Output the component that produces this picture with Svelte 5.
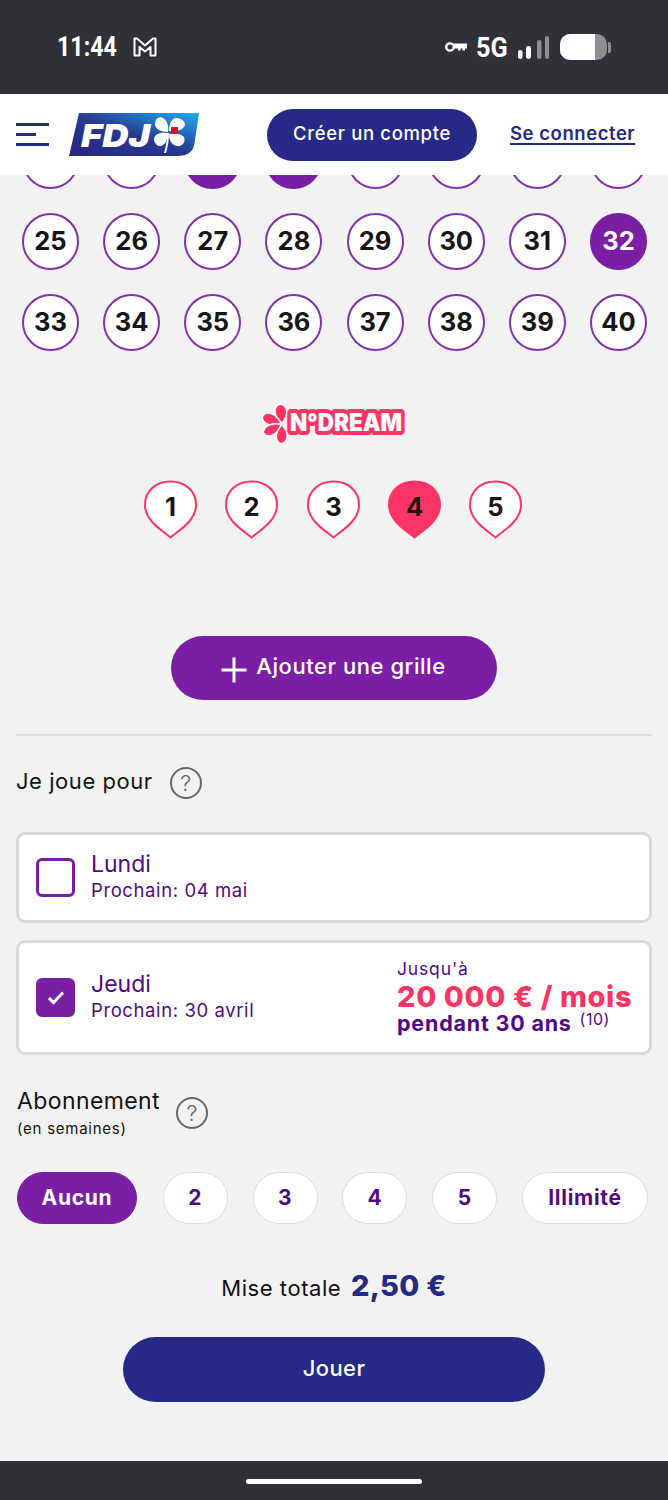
<script>
  const rows = Array.from({ length: 24 }, (_, i) => i + 17);
  const picked = [19, 20, 32];
  const dreams = [1, 2, 3, 4, 5];
  const durations = ['2', '3', '4', '5'];
</script>

<div class="page">
  <div class="status">
    <div class="status-left">
      <span class="time">11:44</span>
      <svg class="gmail" viewBox="0 0 24 20" width="24" height="20" aria-hidden="true">
        <path d="M1.500 1.500 L1.500 18.500 L6.500 18.500 L6.500 10 L12 14.500 L17.500 10 L17.500 18.500 L22.500 18.500 L22.500 1.500 L20 1.500 L12 8.500 L4 1.500 Z" fill="none" stroke="#fff" stroke-width="2" stroke-linejoin="round"/>
      </svg>
    </div>
    <div class="status-right">
      <svg viewBox="0 0 22 10" width="22" height="10" aria-hidden="true">
        <ellipse cx="5" cy="5" rx="3.800" ry="3.600" fill="none" stroke="#fff" stroke-width="2.400"/>
        <path d="M9 1.500 H22 V6.500 H20 V8.500 H17.500 V6.500 H15.500 V8.500 H13 V6.500 H9 Z" fill="#fff"/>
      </svg>
      <span class="fiveg">5G</span>
      <svg class="signal" viewBox="0 0 31 23" width="31" height="23" aria-hidden="true">
        <rect x="0" y="14" width="4.500" height="9" rx="2.200" fill="#fff"/>
        <rect x="8" y="10" width="5" height="13" rx="2.400" fill="#fff"/>
        <rect x="19" y="4" width="4.500" height="19" rx="2.200" fill="#8e8e8e"/>
        <rect x="27" y="0" width="4" height="23" rx="2" fill="#8e8e8e"/>
      </svg>
      <div class="battery"><div class="battery-fill"></div></div>
      <div class="battery-tip"></div>
    </div>
  </div>

  <header class="top">
    <div class="burger"><i></i><i class="short"></i><i></i></div>
    <svg class="logo" viewBox="0 0 130 43" width="130" height="43" role="img" aria-label="FDJ">
      <defs>
        <linearGradient id="fdj" x1="0.080" y1="0.900" x2="0.950" y2="0">
          <stop offset="0" stop-color="#262a86"/>
          <stop offset="0.450" stop-color="#27388f"/>
          <stop offset="1" stop-color="#1eaaea"/>
        </linearGradient>
      </defs>
      <path d="M10 0 H130 L125.500 30 Q124 43 108 43 H0 Z" fill="url(#fdj)"/>
      <text class="fdj" x="12" y="34" textLength="69" lengthAdjust="spacingAndGlyphs">FDJ</text>
      <g fill="#fff">
        <path d="M99 19 C92 19 86 16 86 11 C86 6 90 3 94 5 C98 7 100 13 99 19Z"/>
        <path d="M100 18 C100 11 103 4 108 5 C114 6 118 10 115 14 C112 18 106 19 100 18Z"/>
        <path d="M98 20 C91 19 85 21 85 27 C86 32 91 35 94 32 C97 30 99 26 98 20Z"/>
        <path d="M100 21 C104 20 112 20 115 24 C117 29 113 34 108 33 C103 32 100 28 100 21Z"/>
        <path d="M98 20 C98 27 97 33 95 40 L97 40 C99 33 100 27 100 20Z"/>
      </g>
      <rect x="102" y="14" width="7" height="7" fill="#e8101c"/>
    </svg>
    <button class="signup">Créer un compte</button>
    <a class="login" href="#login">Se connecter</a>
  </header>

  <main>
    <div class="balls">
      {#each rows as n}
        <div class="ball" class:on={picked.includes(n)}>{n >= 25 ? n : ''}</div>
      {/each}
    </div>

    <div class="dream-logo">
      <svg viewBox="0 0 146 42" width="146" height="42" role="img" aria-label="N°DREAM">
        <g fill="#fd3566" stroke="#fff" stroke-width="2.500" paint-order="stroke" stroke-linejoin="round">
          <path d="M21 19 C13 13 13 3 19 2 C26 2 27 12 21 19Z"/>
          <path d="M19 20 C12 23 3 21 2 15 C4 7 15 11 19 20Z"/>
          <path d="M19 22 C12 20 4 23 3 29 C6 36 16 31 19 22Z"/>
          <path d="M21 23 C15 29 14 38 20 40 C27 39 27 29 21 23Z"/>
        </g>
        <text class="dream-text" x="29" y="28" textLength="112" lengthAdjust="spacingAndGlyphs">N°DREAM</text>
      </svg>
    </div>

    <div class="hearts">
      {#each dreams as n}
        <svg class="heart" class:on={n === 4} viewBox="0 0 53 59" width="53" height="59" role="img" aria-label={String(n)}>
          <path d="M26.500 57.500 C19 51 1 41 1 25 C1 10 13 1.500 26.500 1.500 C40 1.500 52 10 52 25 C52 41 34 51 26.500 57.500Z"/>
          <text x="26.500" y="36">{n}</text>
        </svg>
      {/each}
    </div>

    <button class="add">
      <svg viewBox="0 0 28 28" width="28" height="28" aria-hidden="true">
        <path d="M14 1.500 V26.500 M1.500 14 H26.500" stroke="#fff" stroke-width="3" fill="none"/>
      </svg>
      <span>Ajouter une grille</span>
    </button>

    <hr />

    <div class="label-row play">
      <span class="label">Je joue pour</span>
      <span class="help">?</span>
    </div>

    <div class="card lundi">
      <span class="check"></span>
      <div class="day">
        <div class="day-name">Lundi</div>
        <div class="day-next">Prochain: 04 mai</div>
      </div>
    </div>

    <div class="card jeudi">
      <span class="check on">
        <svg viewBox="0 0 18 15" width="18" height="15" aria-hidden="true">
          <path d="M2 8 L6.500 12.500 L16 2.500" fill="none" stroke="#fff" stroke-width="3"/>
        </svg>
      </span>
      <div class="day">
        <div class="day-name">Jeudi</div>
        <div class="day-next">Prochain: 30 avril</div>
      </div>
      <div class="prize">
        <div class="upto">Jusqu'à</div>
        <div class="amount">20 000 € / mois</div>
        <div class="during">pendant 30 ans <sup>(10)</sup></div>
      </div>
    </div>

    <div class="label-row sub">
      <div>
        <div class="label abo">Abonnement</div>
        <div class="weeks">(en semaines)</div>
      </div>
      <span class="help">?</span>
    </div>

    <div class="pills">
      <span class="pill active wide">Aucun</span>
      {#each durations as d}
        <span class="pill">{d}</span>
      {/each}
      <span class="pill wider">Illimité</span>
    </div>

    <div class="total">Mise totale <strong>2,50 €</strong></div>

    <button class="play-btn">Jouer</button>
  </main>

  <div class="navbar"><i></i></div>
</div>

<style>
  :global(body) {
    margin: 0;
    background: #f2f2f2;
  }
  .page {
    width: 668px;
    height: 1500px;
    display: flex;
    flex-direction: column;
    overflow: hidden;
    font-family: Inter, "Liberation Sans", sans-serif;
    color: #111;
  }
  .status {
    height: 94px;
    flex: none;
    box-sizing: border-box;
    background: #303136;
    display: flex;
    justify-content: space-between;
    align-items: center;
    padding: 0 57px;
    color: #fff;
  }
  .status-left {
    display: flex;
    align-items: center;
    gap: 15px;
  }
  .time {
    display: block;
    width: 61px;
    font-family: Roboto, sans-serif;
    font-weight: 700;
    font-size: 27px;
    white-space: nowrap;
    transform: scaleX(0.86);
    transform-origin: left center;
  }
  .status-right {
    display: flex;
    align-items: center;
  }
  .fiveg {
    display: block;
    width: 31px;
    margin: 0 11px 0 9px;
    font-family: Roboto, sans-serif;
    font-weight: 700;
    font-size: 28px;
    white-space: nowrap;
    transform: scaleX(0.9);
    transform-origin: left center;
  }
  .battery {
    width: 47px;
    height: 26px;
    margin-left: 11px;
    border-radius: 10px;
    background: #8e8e8e;
    overflow: hidden;
  }
  .battery-fill {
    width: 35px;
    height: 100%;
    background: #fff;
  }
  .battery-tip {
    width: 3px;
    height: 11px;
    margin-left: 1px;
    border-radius: 0 2px 2px 0;
    background: #8e8e8e;
  }
  .top {
    position: relative;
    z-index: 2;
    height: 81px;
    flex: none;
    box-sizing: border-box;
    background: #fff;
    display: flex;
    align-items: center;
    padding: 0 0 0 16px;
  }
  .burger {
    width: 33px;
    display: flex;
    flex-direction: column;
    gap: 7px;
  }
  .burger i {
    display: block;
    height: 3px;
    background: #262a86;
  }
  .burger .short { width: 20px; }
  .logo { margin-left: 20px; margin-top: -1px; }
  .fdj {
    font-family: Inter, sans-serif;
    font-weight: 900;
    font-style: italic;
    font-size: 32px;
    fill: #fff;
  }
  .signup {
    margin-left: 68px;
    width: 210px;
    height: 52px;
    border: 0;
    border-radius: 26px;
    background: #262a86;
    color: #fff;
    font: 500 18.500px Inter, sans-serif;
    letter-spacing: 0.65px;
    padding: 0 0 4px;
  }
  .login {
    margin-left: 33px;
    font-weight: 600;
    font-size: 18.500px;
    letter-spacing: 0.55px;
    color: #262a86;
    text-decoration-thickness: 2px;
    text-underline-offset: 3px;
    margin-top: -4px;
  }
  main {
    flex: 1;
    min-height: 0;
    display: flex;
    flex-direction: column;
  }
  .balls {
    margin-top: -43px;
    padding: 0 21px 0 22px;
    display: grid;
    grid-template-columns: repeat(8, 57px);
    justify-content: space-between;
    row-gap: 24px;
  }
  .ball {
    width: 57px;
    height: 57px;
    box-sizing: border-box;
    border: 2px solid #8232ab;
    border-radius: 50%;
    background: #fff;
    display: flex;
    align-items: center;
    justify-content: center;
    padding-bottom: 2px;
    font-weight: 700;
    font-size: 25.500px;
    color: #161616;
  }
  .ball.on {
    background: #7a1ea5;
    border-color: #7a1ea5;
    color: #fff;
  }
  .dream-logo {
    margin-top: 52px;
    display: flex;
    justify-content: center;
    height: 42px;
  }
  .dream-logo svg { overflow: visible; }
  .dream-text {
    font-family: Inter, sans-serif;
    font-weight: 900;
    font-size: 24px;
    fill: #fff;
    stroke: #fd3566;
    stroke-width: 8px;
    stroke-linejoin: round;
    paint-order: stroke;
  }
  .hearts {
    margin-top: 35px;
    margin-right: 2px;
    display: flex;
    justify-content: center;
    gap: 28.250px;
  }
  .heart path {
    fill: #fff;
    stroke: #fd3566;
    stroke-width: 2;
  }
  .heart.on path { fill: #fd3566; }
  .heart text {
    font-family: Inter, sans-serif;
    font-weight: 700;
    font-size: 25.500px;
    text-anchor: middle;
    fill: #161616;
  }
  .add {
    align-self: center;
    margin-top: 97px;
    width: 326px;
    height: 64px;
    flex: none;
    border: 0;
    border-radius: 32px;
    background: #7a1ea5;
    color: #fff;
    font: 500 22px Inter, sans-serif;
    letter-spacing: 0.55px;
    display: flex;
    align-items: center;
    justify-content: center;
    gap: 8px;
    padding: 0 2px 0 0;
  }
  .add span { margin-top: -5px; }
  .add svg { margin-top: 4px; }
  hr {
    width: 636px;
    margin: 34px 0 0 16px;
    border: 0;
    border-top: 2px solid #dcdcdc;
    flex: none;
  }
  .label-row {
    display: flex;
    align-items: center;
    padding-left: 16px;
  }
  .play {
    margin-top: 29px;
    gap: 17px;
    height: 34px;
  }
  .label {
    font-size: 22px;
    letter-spacing: 0.55px;
    font-weight: 400;
    color: #111;
  }
  .play .label { margin-top: -2px; }
  .play .help { margin-top: 2px; }
  .help {
    width: 32px;
    height: 32px;
    box-sizing: border-box;
    border: 2px solid #666;
    border-radius: 50%;
    display: flex;
    align-items: center;
    justify-content: center;
    font-size: 22px;
    font-weight: 300;
    color: #666;
  }
  .card {
    width: 636px;
    margin-left: 16px;
    box-sizing: border-box;
    flex: none;
    background: #fff;
    border: 3px solid #d9d9d9;
    border-radius: 9px;
    display: flex;
    align-items: center;
    padding: 0 17px 0 17px;
  }
  .lundi {
    margin-top: 33px;
    height: 91px;
  }
  .jeudi {
    margin-top: 17px;
    height: 115px;
  }
  .check {
    width: 39px;
    height: 39px;
    box-sizing: border-box;
    border: 3px solid #7a1ea5;
    border-radius: 6px;
    flex: none;
    display: flex;
    align-items: center;
    justify-content: center;
  }
  .check.on { background: #7a1ea5; }
  .day {
    margin-left: 16px;
    margin-bottom: 4px;
    color: #500a82;
  }
  .day-name {
    font-size: 23px;
    line-height: 28px;
  }
  .day-next {
    font-size: 18.500px;
    letter-spacing: 0.6px;
    line-height: 24px;
  }
  .prize {
    margin-left: auto;
    width: 235px;
    margin-bottom: 3px;
    color: #500a82;
  }
  .upto {
    font-size: 17.500px;
    letter-spacing: 0.85px;
    line-height: 22px;
  }
  .amount {
    font-weight: 800;
    font-size: 29px;
    letter-spacing: 0.65px;
    line-height: 33px;
    color: #fd3566;
    white-space: nowrap;
  }
  .during {
    font-weight: 700;
    font-size: 21.500px;
    letter-spacing: 0.8px;
    line-height: 21px;
    white-space: nowrap;
  }
  .during sup {
    font-weight: 400;
    font-size: 16px;
    letter-spacing: 0.5px;
    line-height: 0;
    vertical-align: 6px;
    margin-left: 2px;
  }
  .sub {
    margin-top: 31px;
    gap: 16px;
    padding-left: 17px;
  }
  .sub .help { margin-top: 2px; }
  .weeks {
    font-size: 15px;
    letter-spacing: 0.75px;
    line-height: 18px;
    margin-top: 4px;
  }
  .abo {
    font-size: 23px;
    letter-spacing: 0.4px;
    line-height: 30px;
  }
  .pills {
    margin: 34px 20px 0 17px;
    display: flex;
    justify-content: space-between;
  }
  .pill {
    width: 65px;
    height: 52px;
    box-sizing: border-box;
    border: 1px solid #dcdcdc;
    border-radius: 26px;
    background: #fff;
    display: flex;
    align-items: center;
    justify-content: center;
    padding-bottom: 2px;
    font-weight: 700;
    font-size: 21px;
    letter-spacing: 0.7px;
    color: #500a82;
  }
  .pill.wide { width: 120px; margin-right: 1px; }
  .pill.wider { width: 126px; }
  .pill.active {
    background: #7a1ea5;
    border-color: #7a1ea5;
    color: #fff;
  }
  .total {
    margin-top: 43px;
    text-align: center;
    font-size: 22px;
    letter-spacing: 0.55px;
    line-height: 38px;
  }
  .total strong {
    font-size: 29px;
    font-weight: 800;
    letter-spacing: 0.3px;
    color: #262a86;
    margin-left: 3px;
  }
  .play-btn {
    align-self: center;
    margin-top: 30px;
    width: 422px;
    height: 65px;
    flex: none;
    border: 0;
    border-radius: 33px;
    background: #262a86;
    color: #fff;
    font: 500 22px Inter, sans-serif;
    letter-spacing: 0.4px;
    padding: 0 0 3px;
  }
  .navbar {
    height: 39px;
    flex: none;
    background: #303136;
    display: flex;
    justify-content: center;
    align-items: center;
  }
  .navbar i {
    display: block;
    width: 176px;
    height: 5px;
    border-radius: 3px;
    background: #fff;
    margin-top: 2px;
  }
</style>
